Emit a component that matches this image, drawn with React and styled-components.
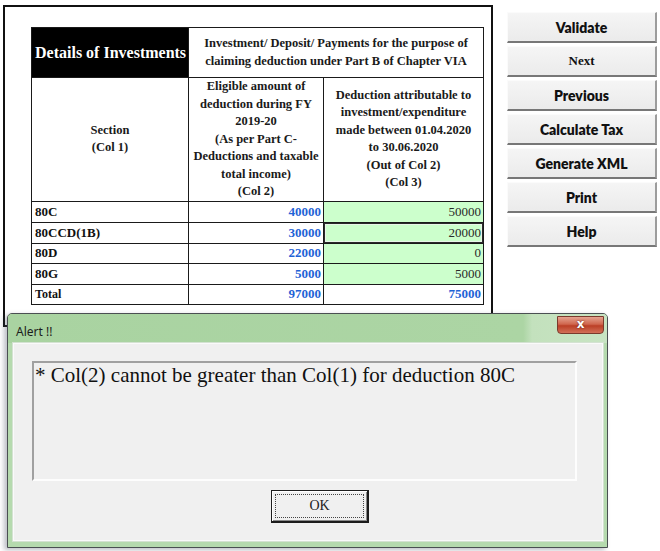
import React from "react";
import styled, { createGlobalStyle } from "styled-components";

const GlobalStyle = createGlobalStyle`
  html, body {
    margin: 0;
    padding: 0;
    background: #ffffff;
  }
`;

const rows = [
  { section: "80C", eligible: "40000", claimed: "50000" },
  { section: "80CCD(1B)", eligible: "30000", claimed: "20000", selected: true },
  { section: "80D", eligible: "22000", claimed: "0", short: true },
  { section: "80G", eligible: "5000", claimed: "5000" },
];

const buttons = [
  { label: "Validate" },
  { label: "Next", serif: true },
  { label: "Previous" },
  { label: "Calculate Tax" },
  { label: "Generate XML" },
  { label: "Print" },
  { label: "Help" },
];

const App = () => {
  return (
    <Page>
      <GlobalStyle />
      <Frame>
        <Sheet>
          <colgroup>
            <col style={{ width: 157 }} />
            <col style={{ width: 135 }} />
            <col style={{ width: 160 }} />
          </colgroup>
          <tbody>
            <TitleRow>
              <BlackCell>Details of Investments</BlackCell>
              <HeadCell colSpan={2}>
                Investment/ Deposit/ Payments for the purpose of
                <br />
                claiming deduction under Part B of Chapter VIA
              </HeadCell>
            </TitleRow>
            <ColumnsRow>
              <HeadCell>
                Section
                <br />
                (Col 1)
              </HeadCell>
              <HeadCell>
                Eligible amount of
                <br />
                deduction during FY
                <br />
                2019-20
                <br />
                (As per Part C-
                <br />
                Deductions and taxable
                <br />
                total income)
                <br />
                (Col 2)
              </HeadCell>
              <HeadCell>
                Deduction attributable to
                <br />
                investment/expenditure
                <br />
                made between 01.04.2020
                <br />
                to 30.06.2020
                <br />
                (Out of Col 2)
                <br />
                (Col 3)
              </HeadCell>
            </ColumnsRow>
            {rows.map((r) => (
              <DataRow key={r.section} $short={r.short}>
                <LabelCell>{r.section}</LabelCell>
                <AmountCell $blue>{r.eligible}</AmountCell>
                <InputCell $selected={r.selected}>{r.claimed}</InputCell>
              </DataRow>
            ))}
            <DataRow $short>
              <LabelCell $small>Total</LabelCell>
              <AmountCell $blue>97000</AmountCell>
              <AmountCell $blue>75000</AmountCell>
            </DataRow>
          </tbody>
        </Sheet>
      </Frame>

      <SideBar>
        {buttons.map((b) => (
          <SideButton key={b.label} $serif={b.serif}>
            {b.label}
          </SideButton>
        ))}
      </SideBar>

      <Dialog>
        <TitleBar>
          <TitleText>Alert !!</TitleText>
          <CloseButton>x</CloseButton>
        </TitleBar>
        <Client>
          <MessageBox>* Col(2) cannot be greater than Col(1) for deduction 80C</MessageBox>
          <OkRow>
            <OkButton>OK</OkButton>
          </OkRow>
        </Client>
      </Dialog>
    </Page>
  );
};

export default App;

const Page = styled.div`
  position: relative;
  width: 660px;
  height: 551px;
  display: flex;
  align-items: flex-start;
  padding: 5px 0 0 3px;
  box-sizing: border-box;
  overflow: hidden;
`;

const Frame = styled.div`
  width: 490px;
  height: 322px;
  box-sizing: border-box;
  border: 2px solid #111;
  padding: 20px 0 0 26px;
  flex-shrink: 0;
`;

const Sheet = styled.table`
  border-collapse: collapse;
  table-layout: fixed;
  width: 452px;
  font-family: "Liberation Serif", "Times New Roman", serif;
  color: #111;

  td {
    border: 1px solid #1a1a1a;
    padding: 0;
  }
`;

const TitleRow = styled.tr`
  height: 50px;
`;

const ColumnsRow = styled.tr`
  height: 121px;
`;

const DataRow = styled.tr`
  height: ${({ $short }) => ($short ? "20px" : "21px")};
`;

const BlackCell = styled.td`
  background: #000;
  color: #fff;
  font-size: 16px;
  font-weight: bold;
  padding-left: 3px !important;
  white-space: nowrap;
  vertical-align: middle;
`;

const HeadCell = styled.td`
  text-align: center;
  vertical-align: middle;
  font-size: 12.5px;
  font-weight: bold;
  line-height: 17.5px;
  white-space: nowrap;
  color: #1a1a1a;
`;

const LabelCell = styled.td`
  font-size: ${({ $small }) => ($small ? "12px" : "13px")};
  font-weight: bold;
  padding-left: 3px !important;
  vertical-align: middle;
`;

const AmountCell = styled.td`
  text-align: right;
  padding-right: 2px !important;
  font-size: 13px;
  font-weight: bold;
  color: ${({ $blue }) => ($blue ? "#1f63d6" : "#222")};
`;

const InputCell = styled.td`
  text-align: right;
  padding-right: 2px !important;
  font-size: 13px;
  color: #2a2a2a;
  background: #ccffcc;
  box-shadow: ${({ $selected }) =>
    $selected ? "inset 0 0 0 1px #2a2a2a, inset 0 0 0 2px #e8f5e8" : "none"};
`;

const SideBar = styled.div`
  margin: 7px 0 0 14px;
  width: 150px;
  display: flex;
  flex-direction: column;
  gap: 3px;
`;

const SideButton = styled.button`
  height: 31px;
  box-sizing: border-box;
  padding: 0;
  border-top: 1px solid #fbfbfb;
  border-left: 1px solid #fbfbfb;
  border-right: 2px solid #9c9c9c;
  border-bottom: 2px solid #777;
  background: linear-gradient(#f5f5f5, #ebebeb);
  color: #111;
  font-family: ${({ $serif }) =>
    $serif ? '"Liberation Serif", "Times New Roman", serif' : 'Lato, "Open Sans", sans-serif'};
  font-size: ${({ $serif }) => ($serif ? "13px" : "14px")};
  font-weight: ${({ $serif }) => ($serif ? 700 : 800)};
  cursor: pointer;
`;

const Dialog = styled.div`
  position: absolute;
  left: 7px;
  top: 313px;
  width: 601px;
  height: 235px;
  box-sizing: border-box;
  border: 1px solid #4a4f52;
  border-radius: 5px 5px 0 0;
  background: #b5daae;
  padding: 0 4px 6px 5px;
  display: flex;
  flex-direction: column;
  box-shadow: -3px 2px 5px rgba(60, 70, 90, 0.35);
`;

const TitleBar = styled.div`
  height: 29px;
  margin: 0 -4px 0 -5px;
  padding: 0 3px 0 8px;
  display: flex;
  align-items: flex-start;
  justify-content: space-between;
  background: linear-gradient(
    90deg,
    #a9d3a1 0%,
    #acd5a4 86%,
    #c3e1bd 87.5%,
    #c8e4c3 100%
  );
  border-radius: 4px 4px 0 0;
`;

const TitleText = styled.span`
  font-family: "Noto Sans", "Open Sans", sans-serif;
  font-size: 12px;
  color: #1c1c1c;
  margin-top: 9px;
`;

const CloseButton = styled.span`
  width: 47px;
  height: 18px;
  margin-top: 2px;
  box-sizing: border-box;
  border: 1px solid #7a3a2c;
  border-radius: 0 0 4px 4px;
  background: linear-gradient(#e5a390 0%, #d0664e 45%, #bb3f26 55%, #d27058 100%);
  color: #fff;
  font-family: "DejaVu Sans", sans-serif;
  font-size: 12px;
  font-weight: bold;
  line-height: 15px;
  text-align: center;
  text-shadow: 0 0 2px #5a1a10;
`;

const Client = styled.div`
  flex: 1;
  background: #f0f0f0;
  border: 1px solid #fafafa;
  box-shadow: 0 0 0 1px #d4e2d2;
  padding: 17px 0 0 18px;
  box-sizing: border-box;
`;

const MessageBox = styled.div`
  width: 545px;
  height: 120px;
  box-sizing: border-box;
  border-top: 2px solid #a0a0a0;
  border-left: 2px solid #a0a0a0;
  border-right: 2px solid #fdfdfd;
  border-bottom: 2px solid #fdfdfd;
  background: #f0f0f0;
  padding: 0 0 0 1px;
  font-family: "Liberation Serif", "Times New Roman", serif;
  font-weight: 400;
  font-size: 21px;
  line-height: 24px;
  color: #111;
  white-space: nowrap;
`;

const OkRow = styled.div`
  margin-top: 9px;
  padding-left: 239px;
`;

const OkButton = styled.button`
  position: relative;
  width: 98px;
  height: 33px;
  box-sizing: border-box;
  border: 2px solid #1c1c1c;
  border-top-width: 1px;
  border-left-width: 1px;
  background: #f0f0f0;
  box-shadow: inset 1px 1px 0 #ffffff, inset -1px -1px 0 #8a8a8a;
  font-family: "Liberation Serif", "Times New Roman", serif;
  font-size: 14px;
  color: #222;
  padding: 0;

  &::after {
    content: "";
    position: absolute;
    inset: 3px;
    border: 1px dotted #444;
  }
`;
